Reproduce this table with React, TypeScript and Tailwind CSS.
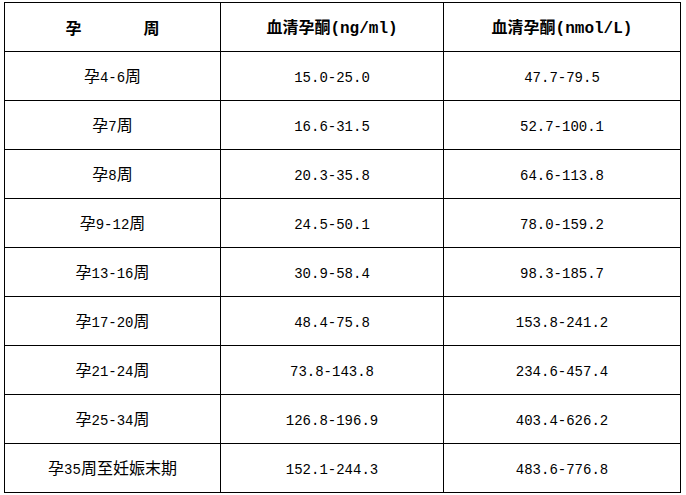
const rows = [
  ['孕4-6周', '15.0-25.0', '47.7-79.5'],
  ['孕7周', '16.6-31.5', '52.7-100.1'],
  ['孕8周', '20.3-35.8', '64.6-113.8'],
  ['孕9-12周', '24.5-50.1', '78.0-159.2'],
  ['孕13-16周', '30.9-58.4', '98.3-185.7'],
  ['孕17-20周', '48.4-75.8', '153.8-241.2'],
  ['孕21-24周', '73.8-143.8', '234.6-457.4'],
  ['孕25-34周', '126.8-196.9', '403.4-626.2'],
  ['孕35周至妊娠末期', '152.1-244.3', '483.6-776.8'],
]

// 中文と英数字でフォントを分ける（宋体っぽく半角を細く）
function Mixed({ text, latin = 'text-[14px]' }: { text: string; latin?: string }) {
  const parts = text.split(/([\x00-\x7F]+)/).filter(Boolean)
  return (
    <span className="whitespace-pre">
      {parts.map((p, i) =>
        /^[\x00-\x7F]+$/.test(p) ? (
          <span key={i} className={`font-['Liberation_Mono',monospace] ${latin}`}>{p}</span>
        ) : (
          <span key={i}>{p}</span>
        )
      )}
    </span>
  )
}

export default function App() {
  const cell = 'h-[49px] border-r border-b border-black flex items-center justify-center'
  return (
    <div className="w-[686px] h-[495px] bg-white pt-[2px] pl-[4px] text-black font-['Noto_Sans_CJK_SC',sans-serif] text-[16px]">
      <div className="grid grid-cols-[216px_223px_237px] w-[677px] border-l border-t border-black">
        {/* ヘッダー */}
        <div className={`${cell} font-bold gap-[62px]`}>
          <span>孕</span>
          <span>周</span>
        </div>
        <div className={`${cell} font-bold`}>
          <Mixed text="血清孕酮(ng/ml)" latin="text-[16px]" />
        </div>
        <div className={`${cell} font-bold`}>
          <Mixed text="血清孕酮(nmol/L)" latin="text-[16px]" />
        </div>

        {rows.map(r => (
          <div key={r[0]} className="contents">
            <div className={cell}><Mixed text={r[0]} /></div>
            <div className={cell}><Mixed text={r[1]} /></div>
            <div className={cell}><Mixed text={r[2]} /></div>
          </div>
        ))}
      </div>
    </div>
  )
}
